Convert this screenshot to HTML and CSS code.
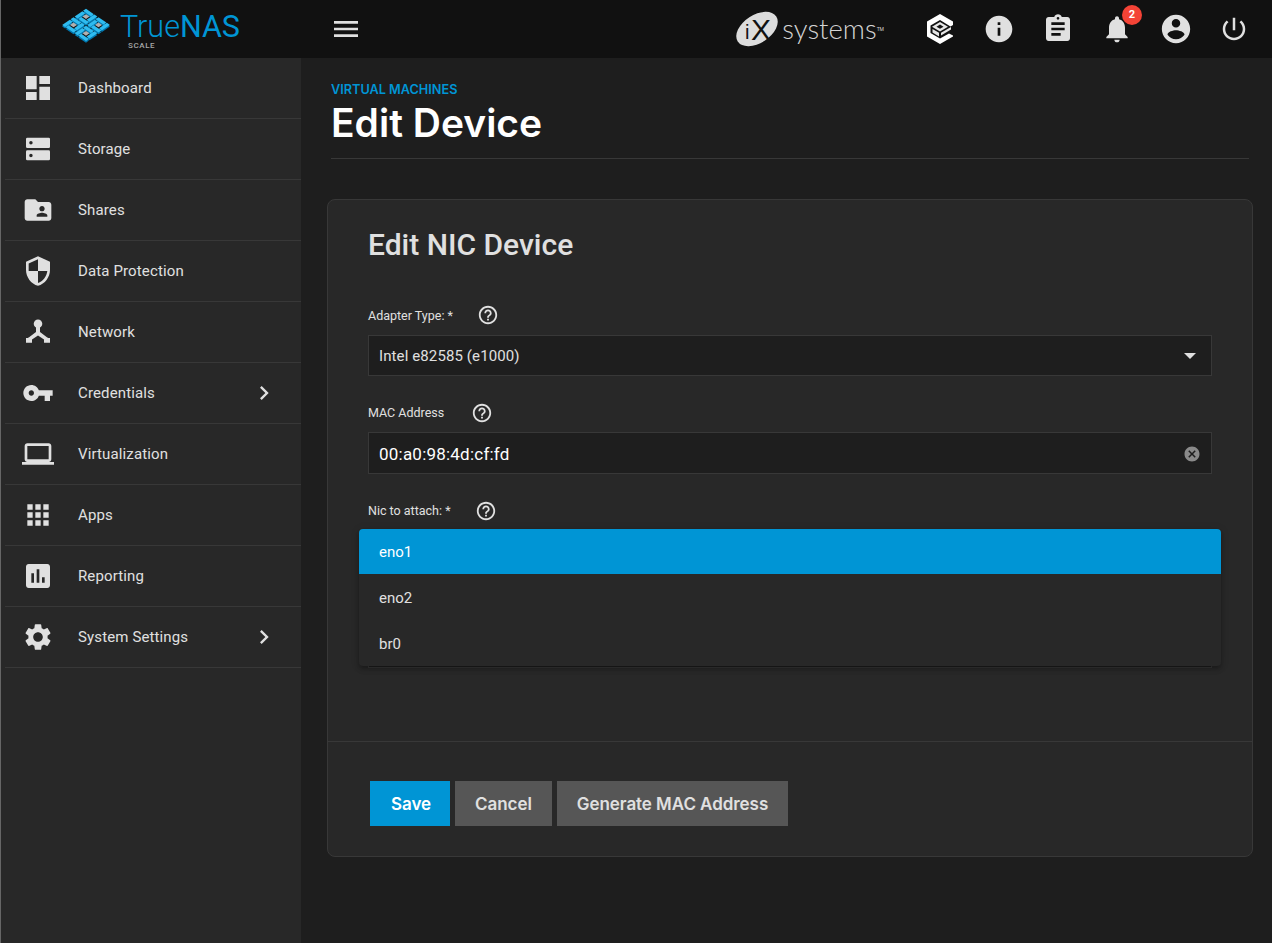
FILE: index.html
```html
<!DOCTYPE html>
<html>
  <head>
    <meta name="viewport" content="width=device-width,initial-scale=1.0" />
    <title>TrueNAS - Edit Device</title>
    <link rel="stylesheet" href="styles.css">
  </head>
  <body>
    <header class="topbar">
      <div class="brand">
        <svg class="brand-mark" viewBox="0 0 50 36" width="50" height="36">
          <defs>
            <g id="cell-back">
              <rect x="0.5" y="0.5" width="6.300" height="2.400"/>
              <rect x="7.200" y="0.5" width="2.400" height="6.300"/>
              <rect x="3.400" y="7.200" width="6.200" height="2.400"/>
              <rect x="0.5" y="3.400" width="2.400" height="6.200"/>
            </g>
            <g id="cell">
              <rect x="0.5" y="0.5" width="6.300" height="2.400" fill="#2fbcf0"/>
              <rect x="7.200" y="0.5" width="2.400" height="6.300" fill="#2fbcf0"/>
              <rect x="3.400" y="7.200" width="6.200" height="2.400" fill="#2fbcf0"/>
              <rect x="0.5" y="3.400" width="2.400" height="6.200" fill="#2fbcf0"/>
              <rect x="3.700" y="3.700" width="2.800" height="2.800" fill="#b0b0b0"/>
            </g>
          </defs>
          <g transform="translate(0 1.700)" fill="#0078b0">
            <g transform="matrix(1.25 .84 -1.25 .84 25 0)">
              <use href="#cell-back"/>
              <use href="#cell-back" x="10"/>
              <use href="#cell-back" y="10"/>
              <use href="#cell-back" x="10" y="10"/>
            </g>
          </g>
          <g transform="matrix(1.25 .84 -1.25 .84 25 0)">
            <use href="#cell"/>
            <use href="#cell" x="10"/>
            <use href="#cell" y="10"/>
            <use href="#cell" x="10" y="10"/>
          </g>
        </svg>
        <div class="brand-text">
          <div class="brand-name"><span class="brand-true">True</span>NAS</div>
          <div class="brand-scale">SCALE</div>
        </div>
      </div>
      <button class="menu-btn">
        <svg viewBox="0 0 24 24" width="32" height="32"><path d="M3 18h18v-2H3v2zm0-5h18v-2H3v2zm0-7v2h18V6H3z"/></svg>
      </button>
      <div class="ix-logo">
        <svg class="ix-mark" viewBox="0 0 42 34" width="42" height="34">
          <ellipse cx="21" cy="17" rx="23" ry="14" transform="rotate(-33 21 17)" fill="#dcdcdc"/>
          <text x="9" y="27" class="ix-i">i</text>
          <text x="15" y="28" class="ix-x">X</text>
        </svg>
        <span class="ix-name">systems</span><span class="ix-tm">TM</span>
      </div>
      <div class="top-icons">
        <button class="top-btn">
          <svg viewBox="0 0 26 30" width="26" height="30"><path d="M13 0L26 7.500V11L23.500 12.500 13 6 3.500 11.500V19L13 24.500 22 19.500 26 21.500V22.500L13 30 0 22.500V7.500z" fill="#fff"/><path d="M13 8L21 12.800 13 17.500 5 12.800zM5.500 15L12 18.800V22.500L5.500 18.500zM14 18.800L24 13V15.500L14 21.500z" fill="#e6e6e6"/><path d="M13 10.500L16.500 12.700 13 14.800 9.500 12.700z" fill="#111"/></svg>
        </button>
        <button class="top-btn">
          <svg viewBox="0 0 24 24" width="32" height="32"><path d="M12 2C6.480 2 2 6.480 2 12s4.480 10 10 10 10-4.480 10-10S17.520 2 12 2zm1 15h-2v-6h2v6zm0-8h-2V7h2v2z"/></svg>
        </button>
        <button class="top-btn">
          <svg viewBox="0 0 24 24" width="32" height="32"><path d="M19 3h-4.180C14.400 1.840 13.300 1 12 1c-1.300 0-2.400.84-2.820 2H5c-1.100 0-2 .9-2 2v14c0 1.100.9 2 2 2h14c1.100 0 2-.9 2-2V5c0-1.100-.9-2-2-2zm-7 0c.55 0 1 .45 1 1s-.45 1-1 1-1-.45-1-1 .45-1 1-1zm2 14H7v-2h7v2zm3-4H7v-2h10v2zm0-4H7V7h10v2z"/></svg>
        </button>
        <button class="top-btn">
          <svg viewBox="0 0 24 24" width="32" height="32"><path d="M12 22c1.100 0 2-.9 2-2h-4c0 1.100.9 2 2 2zm6-6v-5c0-3.070-1.630-5.640-4.500-6.320V4c0-.83-.67-1.500-1.500-1.500s-1.500.67-1.500 1.500v.68C7.640 5.360 6 7.920 6 11v5l-2 2v1h16v-1l-2-2z"/></svg>
          <span class="badge">2</span>
        </button>
        <button class="top-btn">
          <svg viewBox="0 0 24 24" width="34" height="34"><path d="M12 2C6.480 2 2 6.480 2 12s4.480 10 10 10 10-4.480 10-10S17.520 2 12 2zm0 3c1.660 0 3 1.340 3 3s-1.340 3-3 3-3-1.340-3-3 1.340-3 3-3zm0 14.200c-2.500 0-4.710-1.280-6-3.220.03-1.990 4-3.080 6-3.080 1.990 0 5.970 1.090 6 3.080-1.290 1.940-3.500 3.220-6 3.220z"/></svg>
        </button>
        <button class="top-btn top-btn-power">
          <svg viewBox="0 0 24 24" width="30" height="30"><path d="M13 3h-2v10h2V3zm4.830 2.170l-1.420 1.420C17.990 7.860 19 9.810 19 12c0 3.870-3.130 7-7 7s-7-3.130-7-7c0-2.190 1.010-4.140 2.580-5.420L6.170 5.170C4.230 6.820 3 9.260 3 12c0 4.970 4.030 9 9 9s9-4.030 9-9c0-2.740-1.230-5.180-3.170-6.830z"/></svg>
        </button>
      </div>
    </header>

    <div class="layout">
      <nav class="sidebar">
        <a class="nav-item">
          <svg class="nav-icon" viewBox="0 0 24 24"><path d="M13 3V9H21V3M13 21H21V11H13M3 21H11V15H3M3 13H11V3H3V13Z"/></svg>
          <span>Dashboard</span>
        </a>
        <a class="nav-item">
          <svg class="nav-icon" viewBox="0 0 24 24"><path fill-rule="evenodd" d="M4 3.500H20a1 1 0 0 1 1 1V10.300a1 1 0 0 1-1 1H4a1 1 0 0 1-1-1V4.500a1 1 0 0 1 1-1zM6.700 6a1.300 1.300 0 1 0 0 2.600 1.300 1.300 0 0 0 0-2.600zM4 13H20a1 1 0 0 1 1 1V19.500a1 1 0 0 1-1 1H4a1 1 0 0 1-1-1V14a1 1 0 0 1 1-1zM6.700 15.500a1.300 1.300 0 1 0 0 2.600 1.300 1.300 0 0 0 0-2.600z"/></svg>
          <span>Storage</span>
        </a>
        <a class="nav-item">
          <svg class="nav-icon" viewBox="0 0 24 24"><path d="M20 6h-8l-2-2H4c-1.100 0-1.990.9-1.990 2L2 18c0 1.100.9 2 2 2h16c1.100 0 2-.9 2-2V8c0-1.100-.9-2-2-2zm-5 3c1.100 0 2 .9 2 2s-.9 2-2 2-2-.9-2-2 .9-2 2-2zm4 8h-8v-1c0-1.330 2.670-2 4-2s4 .67 4 2v1z"/></svg>
          <span>Shares</span>
        </a>
        <a class="nav-item">
          <svg class="nav-icon" viewBox="0 0 24 24"><path d="M12 1L3 5v6c0 5.550 3.840 10.740 9 12 5.160-1.260 9-6.450 9-12V5l-9-4zm0 10.990h7c-.53 4.120-3.280 7.790-7 8.940V12H5V6.300l7-3.110v8.800z"/></svg>
          <span>Data Protection</span>
        </a>
        <a class="nav-item">
          <svg class="nav-icon" viewBox="0 0 24 24"><circle cx="12" cy="5.800" r="3.200"/><path d="M10.500 7h3v5l5.200 4 1 .5H21V20h-4.500v-2.300L12 14.600l-4.500 3.100V20H3v-3.500h1.300l1-.5 5.200-4z"/></svg>
          <span>Network</span>
        </a>
        <a class="nav-item">
          <svg class="nav-icon" viewBox="0 0 24 24"><path d="M12.650 10C11.830 7.670 9.610 6 7 6c-3.310 0-6 2.690-6 6s2.690 6 6 6c2.610 0 4.830-1.670 5.650-4H17v4h4v-4h2v-4H12.650zM7 14c-1.100 0-2-.9-2-2s.9-2 2-2 2 .9 2 2-.9 2-2 2z"/></svg>
          <span>Credentials</span>
          <svg class="nav-chevron" viewBox="0 0 24 24"><path d="M10 6L8.590 7.410 13.170 12l-4.580 4.590L10 18l6-6z"/></svg>
        </a>
        <a class="nav-item">
          <svg class="nav-icon" viewBox="0 0 24 24"><path d="M20 18c1.100 0 1.990-.9 1.990-2L22 6c0-1.100-.9-2-2-2H4c-1.100 0-2 .9-2 2v10c0 1.100.9 2 2 2H0v2h24v-2h-4zM4 6h16v10H4V6z"/></svg>
          <span>Virtualization</span>
        </a>
        <a class="nav-item">
          <svg class="nav-icon" viewBox="0 0 24 24"><path d="M4 8h4V4H4v4zm6 12h4v-4h-4v4zm-6 0h4v-4H4v4zm0-6h4v-4H4v4zm6 0h4v-4h-4v4zm6-10v4h4V4h-4zm-6 4h4V4h-4v4zm6 6h4v-4h-4v4zm0 6h4v-4h-4v4z"/></svg>
          <span>Apps</span>
        </a>
        <a class="nav-item">
          <svg class="nav-icon" viewBox="0 0 24 24"><path d="M19 3H5c-1.100 0-2 .9-2 2v14c0 1.100.9 2 2 2h14c1.100 0 2-.9 2-2V5c0-1.100-.9-2-2-2zM9 17H7v-7h2v7zm4 0h-2V7h2v10zm4 0h-2v-4h2v4z"/></svg>
          <span>Reporting</span>
        </a>
        <a class="nav-item">
          <svg class="nav-icon" viewBox="0 0 24 24"><path d="M19.140 12.940c.04-.3.06-.61.06-.94 0-.32-.02-.64-.07-.94l2.030-1.580c.18-.14.23-.41.12-.61l-1.920-3.320c-.12-.22-.37-.29-.59-.22l-2.390.96c-.5-.38-1.030-.7-1.620-.94L14.400 2.810c-.04-.24-.24-.41-.48-.41h-3.840c-.24 0-.43.17-.47.41L9.250 5.350c-.59.24-1.130.57-1.620.94l-2.390-.96c-.22-.08-.47 0-.59.22L2.740 8.870c-.12.21-.08.47.12.61l2.030 1.580c-.05.3-.09.63-.09.94s.02.64.07.94l-2.030 1.580c-.18.14-.23.41-.12.61l1.920 3.320c.12.22.37.29.59.22l2.390-.96c.5.38 1.030.7 1.620.94l.36 2.540c.05.24.24.41.48.41h3.840c.24 0 .44-.17.47-.41l.36-2.540c.59-.24 1.130-.56 1.620-.94l2.390.96c.22.08.47 0 .59-.22l1.920-3.320c.12-.22.07-.47-.12-.61l-2.010-1.580zM12 15.600c-1.980 0-3.600-1.620-3.600-3.600s1.620-3.600 3.600-3.600 3.600 1.620 3.600 3.600-1.620 3.600-3.600 3.600z"/></svg>
          <span>System Settings</span>
          <svg class="nav-chevron" viewBox="0 0 24 24"><path d="M10 6L8.590 7.410 13.170 12l-4.580 4.590L10 18l6-6z"/></svg>
        </a>
      </nav>

      <main class="content">
        <div class="page-head">
          <div class="overline">VIRTUAL MACHINES</div>
          <h1 class="page-title">Edit Device</h1>
        </div>

        <section class="card">
          <h2 class="card-title">Edit NIC Device</h2>
          <div class="form">
            <div class="label-row">
              <label>Adapter Type: *</label>
              <svg class="help" viewBox="0 0 24 24"><path d="M11 18h2v-2h-2v2zm1-16C6.480 2 2 6.480 2 12s4.480 10 10 10 10-4.480 10-10S17.520 2 12 2zm0 18c-4.410 0-8-3.590-8-8s3.590-8 8-8 8 3.590 8 8-3.590 8-8 8zm0-14c-2.210 0-4 1.790-4 4h2c0-1.100.9-2 2-2s2 .9 2 2c0 2-3 1.750-3 5h2c0-2.250 3-2.500 3-5 0-2.210-1.790-4-4-4z"/></svg>
            </div>
            <div class="field">
              <span>Intel e82585 (e1000)</span>
              <i class="arrow"></i>
            </div>

            <div class="label-row">
              <label>MAC Address</label>
              <svg class="help help-wide" viewBox="0 0 24 24"><path d="M11 18h2v-2h-2v2zm1-16C6.480 2 2 6.480 2 12s4.480 10 10 10 10-4.480 10-10S17.520 2 12 2zm0 18c-4.410 0-8-3.590-8-8s3.590-8 8-8 8 3.590 8 8-3.590 8-8 8zm0-14c-2.210 0-4 1.790-4 4h2c0-1.100.9-2 2-2s2 .9 2 2c0 2-3 1.750-3 5h2c0-2.250 3-2.500 3-5 0-2.210-1.790-4-4-4z"/></svg>
            </div>
            <div class="field field-input">
              <span>00:a0:98:4d:cf:fd</span>
              <svg class="clear" viewBox="0 0 24 24"><path d="M12 2C6.470 2 2 6.470 2 12s4.470 10 10 10 10-4.470 10-10S17.530 2 12 2zm5 13.590L15.590 17 12 13.410 8.410 17 7 15.590 10.590 12 7 8.410 8.410 7 12 10.590 15.590 7 17 8.410 13.410 12 17 15.590z"/></svg>
            </div>

            <div class="label-row">
              <label>Nic to attach: *</label>
              <svg class="help help-low" viewBox="0 0 24 24"><path d="M11 18h2v-2h-2v2zm1-16C6.480 2 2 6.480 2 12s4.480 10 10 10 10-4.480 10-10S17.520 2 12 2zm0 18c-4.410 0-8-3.590-8-8s3.590-8 8-8 8 3.590 8 8-3.590 8-8 8zm0-14c-2.210 0-4 1.790-4 4h2c0-1.100.9-2 2-2s2 .9 2 2c0 2-3 1.750-3 5h2c0-2.250 3-2.500 3-5 0-2.210-1.790-4-4-4z"/></svg>
            </div>
            <div class="field"></div>

            <div class="label-row"></div>
            <div class="field field-last"></div>
          </div>

          <div class="actions">
            <button class="btn btn-primary">Save</button>
            <button class="btn">Cancel</button>
            <button class="btn">Generate MAC Address</button>
          </div>

          <ul class="dropdown">
            <li class="option selected">eno1</li>
            <li class="option">eno2</li>
            <li class="option">br0</li>
          </ul>
        </section>
      </main>
    </div>
  </body>
</html>
```

FILE: styles.css
```css
* {
  box-sizing: border-box;
}

body {
  margin: 0;
  height: 100vh;
  overflow: hidden;
  display: flex;
  flex-direction: column;
  background: #1e1e1e;
  border-left: 1px solid #666;
  color: #e0e0e0;
  font-family: Roboto, "Liberation Sans", sans-serif;
}

button {
  font-family: inherit;
  border: none;
  background: none;
  padding: 0;
}

/* top bar */
.topbar {
  height: 58px;
  flex-shrink: 0;
  display: flex;
  align-items: center;
  background: #111;
  padding-right: 8px;
}
.brand {
  width: 317px;
  padding-left: 60px;
  display: flex;
  align-items: flex-start;
  height: 58px;
}
.brand-mark {
  margin-top: 8px;
}
.brand-text {
  margin-left: 10px;
  margin-top: 11px;
}
.brand-name {
  font-size: 30.500px;
  line-height: 31px;
  color: #0095d5;
  font-weight: 400;
  margin-left: -1px;
}
.brand-true {
  font-weight: 300;
}
.brand-scale {
  font-size: 8px;
  line-height: 8px;
  letter-spacing: 0.6px;
  font-weight: 500;
  color: #a8a8a8;
  margin-left: 7px;
}
.menu-btn {
  width: 32px;
  height: 32px;
  fill: #e0e0e0;
  margin-left: 12px;
}
.ix-logo {
  margin-left: auto;
  display: flex;
  align-items: center;
  color: #d4d4d4;
}
.ix-mark {
  overflow: visible;
}
.ix-i {
  font-family: "Liberation Sans", sans-serif;
  font-size: 20px;
  fill: #111;
}
.ix-x {
  font-family: "Liberation Sans", sans-serif;
  font-size: 30px;
  fill: #111;
}
.ix-name {
  font-family: Lato, sans-serif;
  font-weight: 300;
  font-size: 27.500px;
  margin-left: 4px;
  line-height: 34px;
}
.ix-tm {
  font-size: 5px;
  align-self: flex-start;
  margin-top: 14px;
}
.top-icons {
  display: flex;
  margin-left: 26px;
}
.top-btn {
  position: relative;
  width: 59px;
  height: 58px;
  display: flex;
  align-items: center;
  justify-content: center;
  fill: #e0e0e0;
}
.top-btn-power {
  padding-right: 2px;
}
.badge {
  position: absolute;
  top: 5px;
  left: 35px;
  width: 20px;
  height: 20px;
  border-radius: 50%;
  background: #f44336;
  color: #fff;
  font-size: 11px;
  font-weight: 700;
  line-height: 20px;
  text-align: center;
}

/* sidebar */
.layout {
  flex: 1;
  display: flex;
  min-height: 0;
}
.sidebar {
  width: 300px;
  flex-shrink: 0;
  background: #282828;
}
.nav-item {
  height: 61px;
  display: flex;
  align-items: center;
  margin-left: 4px;
  padding: 0 23px 0 17px;
  font-size: 15px;
  letter-spacing: 0.13px;
  border-bottom: 1px solid #383838;
}
.nav-icon {
  width: 32px;
  height: 32px;
  fill: #e0e0e0;
  margin-right: 24px;
  flex-shrink: 0;
}
.nav-chevron {
  width: 28px;
  height: 28px;
  fill: #e0e0e0;
  margin-left: auto;
}

/* content */
.content {
  flex: 1;
  padding: 24px 19px 0 26px;
}
.page-head {
  margin: 0 4px 40px;
  height: 77px;
  border-bottom: 1px solid #383838;
}
.overline {
  font-family: Inter, sans-serif;
  font-size: 12.700px;
  line-height: 15px;
  font-weight: 600;
  color: #0095d5;
}
.page-title {
  margin: 0;
  padding-top: 2px;
  font-family: Inter, sans-serif;
  font-size: 39px;
  line-height: 48px;
  font-weight: 600;
  color: #fff;
}

.card {
  position: relative;
  height: 658px;
  background: #282828;
  border: 1px solid #383838;
  border-radius: 8px;
}
.card-title {
  margin: 0;
  padding: 24px 0 0 40px;
  font-size: 30px;
  line-height: 42px;
  font-weight: 500;
  color: #e0e0e0;
}
.form {
  margin-top: 37px;
  padding: 0 40px 73px;
  border-bottom: 1px solid #383838;
}
.label-row {
  height: 24px;
  margin-bottom: 8px;
  display: flex;
  align-items: center;
  font-size: 12.500px;
}
.help {
  width: 22px;
  height: 22px;
  fill: #e0e0e0;
  margin-left: 24px;
}
.help-wide {
  margin: 2px 0 0 27px;
}
.help-low {
  margin-top: 2px;
}
.field {
  height: 41px;
  margin-bottom: 24px;
  padding: 0 15px 0 10px;
  display: flex;
  align-items: center;
  justify-content: space-between;
  background: #1e1e1e;
  border: 1px solid #383838;
  font-size: 15px;
  letter-spacing: 0.11px;
}
.field-input {
  height: 42px;
  font-size: 17px;
  letter-spacing: 0.22px;
  color: #fff;
  padding: 2px 10px 0 10px;
}
.field-last {
  margin-bottom: 0;
}
.arrow {
  width: 0;
  height: 0;
  border-left: 6px solid transparent;
  border-right: 6px solid transparent;
  border-top: 6px solid #e0e0e0;
}
.clear {
  width: 18px;
  height: 18px;
  fill: #8a8a8a;
}

.actions {
  display: flex;
  gap: 5px;
  padding: 39px 0 0 42px;
}
.btn {
  height: 45px;
  padding: 0 20px;
  background: #565656;
  color: #e0e0e0;
  font-family: Inter, sans-serif;
  font-size: 17px;
  font-weight: 600;
  letter-spacing: -0.05px;
}
.btn-primary {
  width: 80px;
  padding: 0 0 0 2px;
  background: #0095d5;
  color: #fff;
}

/* open select panel, sits over the form */
.dropdown {
  position: absolute;
  left: 31px;
  top: 329px;
  width: 862px;
  margin: 0;
  padding: 0;
  list-style: none;
  background: #282828;
  border-radius: 4px;
  overflow: hidden;
  box-shadow: 0 2px 4px -1px rgba(0, 0, 0, 0.2), 0 4px 5px rgba(0, 0, 0, 0.14), 0 1px 10px rgba(0, 0, 0, 0.12);
}
.option {
  height: 46px;
  padding: 2px 0 0 20px;
  display: flex;
  align-items: center;
  font-size: 15px;
}
.selected {
  height: 45px;
  padding-top: 0;
  background: #0095d5;
  color: #fff;
}
```
